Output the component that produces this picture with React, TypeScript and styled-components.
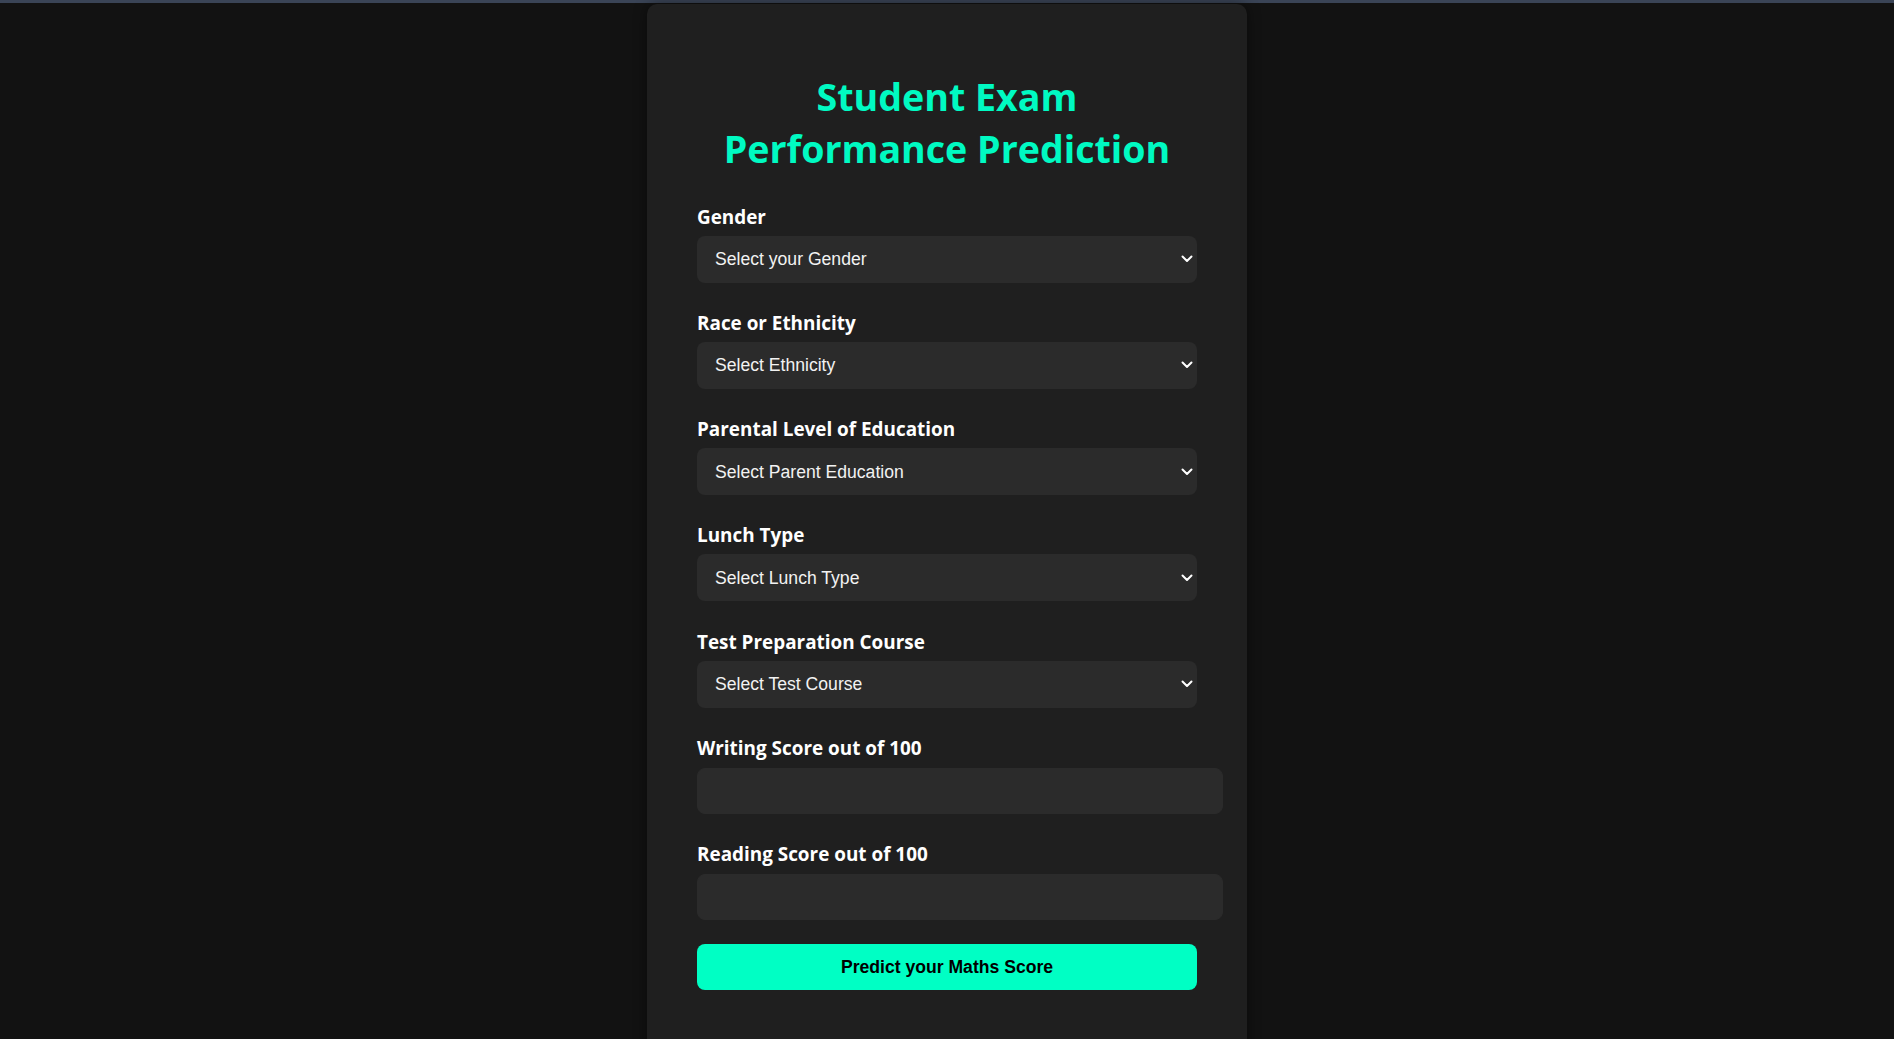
import React from "react";
import styled, { createGlobalStyle } from "styled-components";

const GlobalStyle = createGlobalStyle`
  html, body {
    margin: 0;
    padding: 0;
    background: #121212;
  }
  body {
    font-family: "Open Sans", Lato, sans-serif;
    color: #ffffff;
  }
  * { box-sizing: border-box; }
`;

const TopStripe = styled.div`
  height: 3px;
  background: #3a4456;
`;

const Card = styled.main`
  width: 600px;
  margin: 1px auto 0;
  padding: 40px 50px 70px;
  background: #1f1f1f;
  border-radius: 10px;
  box-shadow: 0 0 14px rgba(0, 0, 0, 0.45);
`;

const Title = styled.h1`
  margin: 27px 0 28.5px;
  text-align: center;
  font-family: "Open Sans", Lato, sans-serif;
  font-weight: 700;
  font-size: 37.6px;
  line-height: 52px;
  color: #00fac2;
`;

const Form = styled.form`
  display: flex;
  flex-direction: column;
`;

const FieldGroup = styled.div<{ $last?: boolean }>`
  display: flex;
  flex-direction: column;
  align-items: flex-start;
  gap: 6px;
  margin-bottom: ${(p) => (p.$last ? "24px" : "27.3px")};
`;

const Label = styled.label`
  font-family: "Open Sans", Lato, sans-serif;
  font-weight: 700;
  font-size: 18.9px;
  line-height: 26px;
  color: #ffffff;
`;

const SelectWrap = styled.div`
  position: relative;
  width: 500px;
`;

const Select = styled.select`
  appearance: none;
  -webkit-appearance: none;
  display: block;
  width: 500px;
  height: 47px;
  padding: 0 30px 0 18px;
  border: none;
  border-radius: 8px;
  background: #2b2b2b;
  color: #f2f2f2;
  font-family: "Liberation Sans", Arial, sans-serif;
  font-size: 17.6px;
  outline: none;
`;

const Chevron = styled.svg`
  position: absolute;
  right: 4px;
  top: 50%;
  width: 12px;
  height: 8px;
  margin-top: -4px;
  pointer-events: none;
`;

const TextInput = styled.input`
  display: block;
  width: 526px;
  height: 46px;
  margin-top: 1px;
  padding: 12px;
  border: 1px solid #2b2b2b;
  border-radius: 8px;
  background: #2b2b2b;
  color: #f2f2f2;
  font-family: "Liberation Sans", Arial, sans-serif;
  font-size: 17.6px;
  outline: none;
`;

const SubmitButton = styled.button`
  width: 500px;
  height: 46px;
  border: none;
  border-radius: 8px;
  background: #00ffc4;
  color: #000000;
  font-family: "Liberation Sans", Arial, sans-serif;
  font-weight: 700;
  font-size: 17.6px;
  cursor: pointer;
`;

type SelectField = { label: string; placeholder: string; options: string[] };

const selectFields: SelectField[] = [
  { label: "Gender", placeholder: "Select your Gender", options: ["Male", "Female"] },
  {
    label: "Race or Ethnicity",
    placeholder: "Select Ethnicity",
    options: ["Group A", "Group B", "Group C", "Group D", "Group E"],
  },
  {
    label: "Parental Level of Education",
    placeholder: "Select Parent Education",
    options: [
      "associate's degree",
      "bachelor's degree",
      "high school",
      "master's degree",
      "some college",
      "some high school",
    ],
  },
  { label: "Lunch Type", placeholder: "Select Lunch Type", options: ["free/reduced", "standard"] },
  { label: "Test Preparation Course", placeholder: "Select Test Course", options: ["None", "Completed"] },
];

const inputFields = ["Writing Score out of 100", "Reading Score out of 100"];

export default function App() {
  return (
    <>
      <GlobalStyle />
      <TopStripe />
      <Card>
        <Title>
          Student Exam
          <br />
          Performance Prediction
        </Title>
        <Form onSubmit={(e) => e.preventDefault()}>
          {selectFields.map((f) => (
            <FieldGroup key={f.label}>
              <Label>{f.label}</Label>
              <SelectWrap>
                <Select defaultValue="">
                  <option value="" disabled>
                    {f.placeholder}
                  </option>
                  {f.options.map((o) => (
                    <option key={o} value={o}>
                      {o}
                    </option>
                  ))}
                </Select>
                <Chevron viewBox="0 0 12 8" aria-hidden="true">
                  <polyline
                    points="1.5,1.5 6,6 10.5,1.5"
                    fill="none"
                    stroke="#ffffff"
                    strokeWidth="2"
                    strokeLinecap="round"
                    strokeLinejoin="round"
                  />
                </Chevron>
              </SelectWrap>
            </FieldGroup>
          ))}
          {inputFields.map((label, i) => (
            <FieldGroup key={label} $last={i === inputFields.length - 1}>
              <Label>{label}</Label>
              <TextInput type="number" min={0} max={100} />
            </FieldGroup>
          ))}
          <SubmitButton type="submit">Predict your Maths Score</SubmitButton>
        </Form>
      </Card>
    </>
  );
}
